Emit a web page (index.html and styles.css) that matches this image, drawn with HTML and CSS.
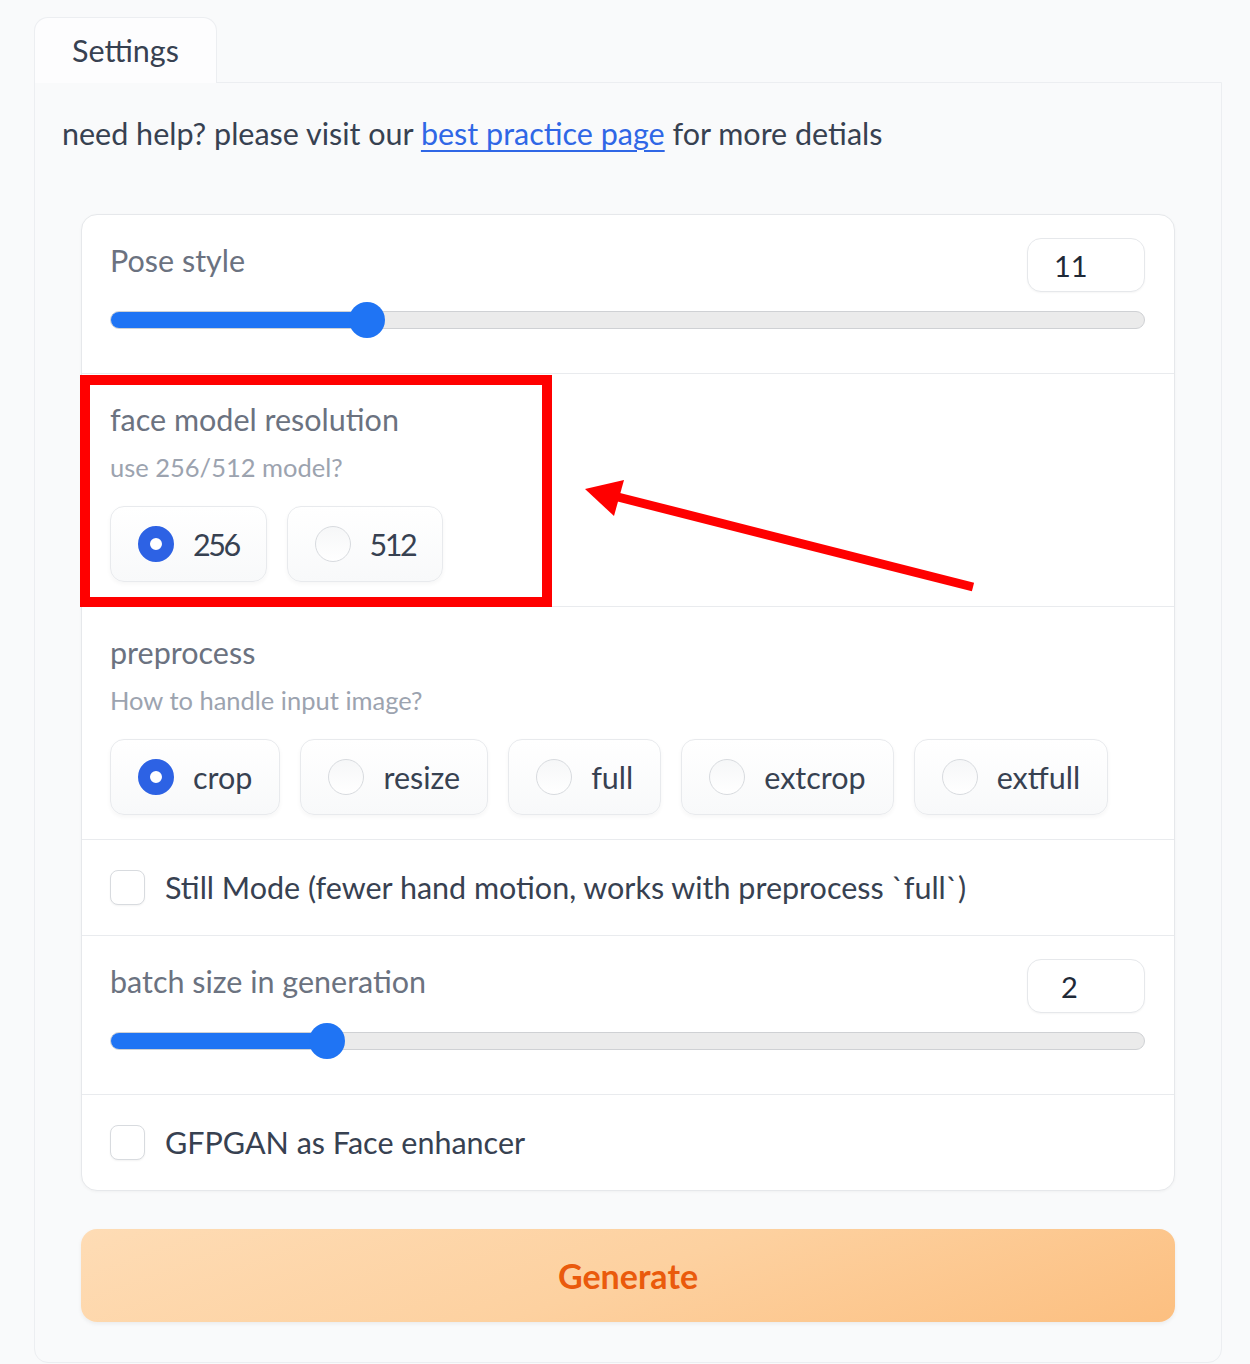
FILE: index.html
```html
<!DOCTYPE html>
<html lang="en">
<head>
<meta charset="utf-8">
<title>Settings</title>
<link rel="stylesheet" href="styles.css">
</head>
<body>
<div class="page">
  <div class="tabs">
    <div class="tab-nav"><div class="tab">Settings</div></div>
    <div class="tab-panel">
      <p class="help">need help? please visit our <a href="#">best practice page</a> for more detials</p>
      <div class="card">
        <div class="section slider-sec first">
          <div class="head"><span class="label">Pose style</span><div class="num">11</div></div>
          <div class="range" style="--v:258px"><div class="track"><div class="fill"></div></div><div class="thumb"></div></div>
        </div>
        <div class="section radio-sec">
          <div class="label">face model resolution</div>
          <div class="info">use 256/512 model?</div>
          <div class="options">
            <label class="opt"><span class="dot on"></span><span class="digits">256</span></label>
            <label class="opt"><span class="dot"></span><span class="digits">512</span></label>
          </div>
        </div>
        <div class="section radio-sec">
          <div class="label">preprocess</div>
          <div class="info">How to handle input image?</div>
          <div class="options">
            <label class="opt"><span class="dot on"></span><span>crop</span></label>
            <label class="opt"><span class="dot"></span><span>resize</span></label>
            <label class="opt"><span class="dot"></span><span>full</span></label>
            <label class="opt"><span class="dot"></span><span>extcrop</span></label>
            <label class="opt"><span class="dot"></span><span>extfull</span></label>
          </div>
        </div>
        <div class="section check-sec">
          <span class="box"></span><span class="check-label">Still Mode (fewer hand motion, works with preprocess `full`)</span>
        </div>
        <div class="section slider-sec">
          <div class="head"><span class="label">batch size in generation</span><div class="num num2">2</div></div>
          <div class="range" style="--v:218px"><div class="track"><div class="fill"></div></div><div class="thumb"></div></div>
        </div>
        <div class="section check-sec">
          <span class="box"></span><span class="check-label">GFPGAN as Face enhancer</span>
        </div>
      </div>
      <button class="generate">Generate</button>
    </div>
  </div>
  <svg class="annot" width="1250" height="1364" viewBox="0 0 1250 1364">
    <rect x="85" y="380" width="462" height="222" fill="none" stroke="#ff0000" stroke-width="10"/>
    <line x1="973" y1="587" x2="610" y2="495" stroke="#ff0000" stroke-width="9"/>
    <polygon points="585,489 624,480 614,516" fill="#ff0000"/>
  </svg>
</div>
</body>
</html>
```
FILE: styles.css
```css
* { box-sizing: border-box; }
body {
  margin: 0;
  background: #f9fafb;
  font-family: Lato, "Noto Sans", sans-serif;
  color: #374151;
}
.page {
  position: relative;
  width: 1250px;
  height: 1364px;
  overflow: hidden;
  padding: 17px 0 0 34px;
}
.tabs { width: 1188px; }
.tab-nav { display: flex; height: 65px; }
.tab {
  width: 183px;
  height: 66px;
  background: #fdfdfe;
  border: 1px solid #eceef1;
  border-bottom: none;
  border-radius: 14px 14px 0 0;
  font-size: 30.5px;
  line-height: 40px;
  padding: 12px 0 0 37px;
  color: #374151;
  position: relative;
  z-index: 1;
}
.tab-panel {
  border: 1px solid #eceef1;
  border-radius: 0 0 14px 14px;
  background: #f9fafb;
  padding: 30px 27px 40px;
}
.help {
  margin: 0;
  font-size: 30.5px;
  line-height: 40px;
  color: #374151;
}
.help a { color: #2f67e6; text-decoration: underline; text-underline-offset: 5px; text-decoration-thickness: 2px; }
.card {
  margin: 61px 19px 0;
  background: #fff;
  border: 1px solid #e6e8eb;
  border-radius: 16px;
  overflow: hidden;
  box-shadow: 0 1px 3px rgba(0,0,0,0.04);
}
.section {
  border-top: 1px solid #e9ebee;
  padding: 0 29px 0 28px;
}
.section.first { border-top: none; }
.label {
  font-size: 30.5px;
  line-height: 40px;
  color: #6b7280;
}
.slider-sec { padding-top: 23px; padding-bottom: 35px; }
.head { display: flex; justify-content: space-between; align-items: flex-start; height: 54px; }
.head .label { line-height: 45px; }
.num {
  width: 118px;
  height: 54px;
  border: 1px solid #e6e8eb;
  border-radius: 14px;
  padding-left: 26px;
  font-size: 29px;
  line-height: 54px;
  color: #1f2937;
  background: #fff;
  box-shadow: 0 1px 2px rgba(0,0,0,0.04);
}
.num2 { padding-left: 33px; }
.range {
  position: relative;
  height: 36px;
  margin-top: 10px;
  display: flex;
  align-items: center;
}
.track {
  width: 100%;
  height: 18px;
  background: #ebebeb;
  border: 1px solid #cfd1d4;
  border-radius: 9px;
  overflow: hidden;
}
.fill {
  width: var(--v);
  height: 100%;
  background: #1f74f4;
}
.thumb {
  position: absolute;
  left: calc(var(--v) - 19px);
  top: 0;
  width: 36px;
  height: 36px;
  border-radius: 50%;
  background: #1f74f4;
}
.radio-sec { padding-top: 25px; padding-bottom: 24px; }
.info {
  margin-top: 11px;
  font-size: 25.5px;
  line-height: 34px;
  color: #9ca3af;
}
.options { display: flex; gap: 20px; margin-top: 22px; }
.opt {
  display: flex;
  align-items: center;
  gap: 19px;
  height: 76px;
  padding: 0 27px;
  border: 1px solid #e8eaed;
  border-radius: 14px;
  background: linear-gradient(180deg, #ffffff, #f8f9fa);
  box-shadow: 0 2px 4px rgba(0,0,0,0.04);
  font-size: 30.5px;
  color: #374151;
}
.digits { letter-spacing: -2.5px; }
.dot {
  width: 36px;
  height: 36px;
  border-radius: 50%;
  border: 1px solid #d8dbdf;
  background: linear-gradient(180deg, #f6f7f8, #ffffff);
  flex: none;
}
.dot.on {
  border: 12px solid #2d62e4;
  background: #fff;
}
.check-sec {
  display: flex;
  align-items: center;
  gap: 20px;
  padding-top: 30px;
  padding-bottom: 30px;
}
.box {
  width: 35px;
  height: 35px;
  border: 1px solid #d8dbdf;
  border-radius: 8px;
  background: #fff;
  box-shadow: 0 1px 2px rgba(0,0,0,0.05);
  flex: none;
}
.check-label { font-size: 30.5px; line-height: 35px; color: #374151; }
.generate {
  display: block;
  width: calc(100% - 38px);
  height: 93px;
  margin: 38px 19px 0;
  border: none;
  border-radius: 16px;
  background: linear-gradient(160deg, #fedcb5 0%, #fdd1a0 50%, #fcbf80 100%);
  box-shadow: 0 2px 4px rgba(0,0,0,0.06);
  font-family: Lato, "Noto Sans", sans-serif;
  font-size: 34px;
  font-weight: 700;
  color: #ea5a0c;
}
.annot {
  position: absolute;
  left: 0;
  top: 0;
  pointer-events: none;
}
```
